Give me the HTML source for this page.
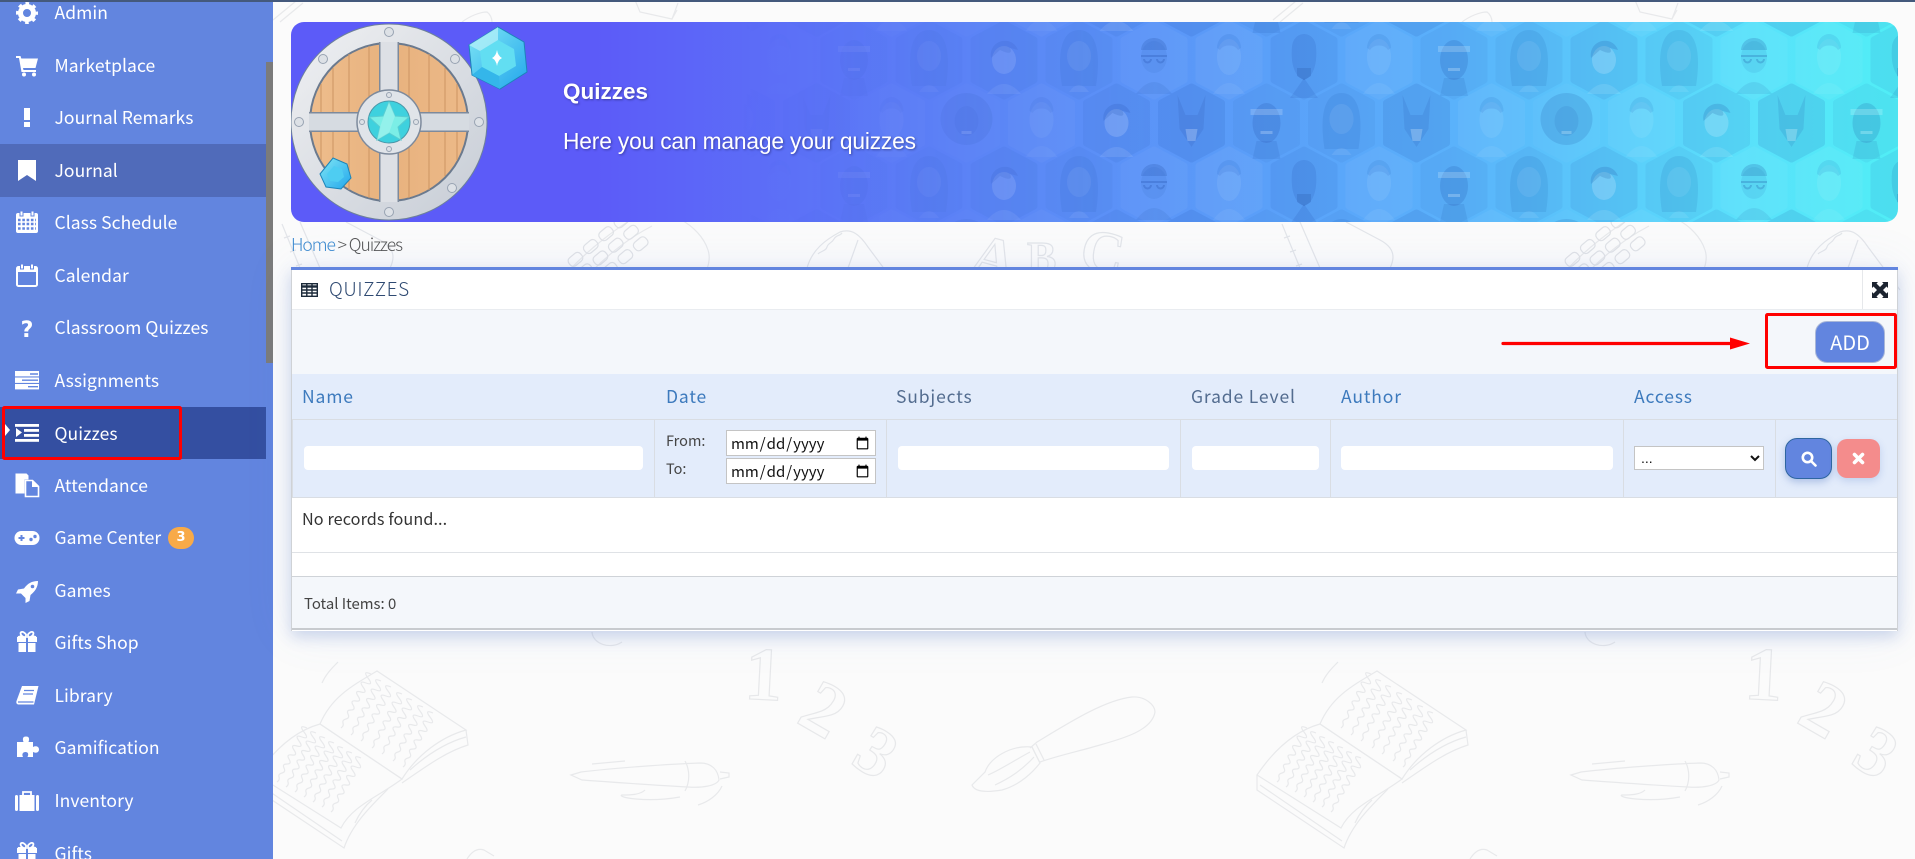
<!DOCTYPE html>
<html lang="en"><head><meta charset="utf-8"><title>Quizzes</title>
<style>
html,body{margin:0;padding:0;width:1915px;height:859px;overflow:hidden;background:#fbfbfb}
body{position:relative;font-family:"Noto Sans CJK JP","Liberation Sans",sans-serif;color:#333}
.a{position:absolute;box-sizing:border-box}
.t{position:absolute;white-space:nowrap;height:30px;line-height:30px}
.nav{left:54.500px;color:#fff;font-size:17.5px;letter-spacing:.06px;margin-top:1px}
.h{font-size:17.5px;letter-spacing:.85px;color:#3d7abd;margin-top:1px}
.h2{color:#536c8f}
.inp{position:absolute;top:446px;height:24px;background:#fff;border-radius:4px}
.vl{position:absolute;top:419px;width:1px;height:78px;background:#d9dde3}
input[type=date]{position:absolute;left:726px;width:150px;height:26px;box-sizing:border-box;border:1px solid #c4c4c4;background:#fff;padding:0 3px;margin:0;font:15px "Noto Sans CJK JP","Liberation Sans",sans-serif;color:#111;border-radius:0}
select{position:absolute;left:1634px;top:446px;width:130px;height:24px;box-sizing:border-box;border:1px solid #c4c4c4;background:#fff;font:14px "Liberation Sans",sans-serif;color:#111;padding:0 0 0 2px;border-radius:0}
svg{display:block}
</style></head><body>

<svg class="a" style="left:0;top:0" width="1915" height="859" viewBox="0 0 1915 859" fill="none" stroke="#e8e9eb" stroke-width="1.2">
<defs>
<path id="sq" d="M0 0q3-2 2-5t3-4 2-5 3-4 2-5 3-4 2-5 3-4 2-5 3-4 2-5 3-4"/>
<g id="bk">
<path d="M320 724C331 698 350 687 377 671L466 730C441 737 417 755 402 779Z"/>
<path d="M320 724C295 731 274 750 257 775L341 828C352 806 378 797 402 779Z"/>
<path d="M257 775V790L344 848C352 824 372 805 388 789M466 730L468 745C445 752 424 768 402 783M260 785L342 841M410 770C430 752 448 742 466 737"/>
<path d="M322 683C326 674 332 668 338 662M355 823C360 812 366 805 372 800"/>
<use href="#sq" x="341" y="728"/><use href="#sq" x="351" y="735"/><use href="#sq" x="361" y="741"/><use href="#sq" x="372" y="748"/><use href="#sq" x="382" y="754"/><use href="#sq" x="393" y="761"/><use href="#sq" x="403" y="767"/>
<use href="#sq" x="277" y="782"/><use href="#sq" x="286" y="787"/><use href="#sq" x="295" y="792"/><use href="#sq" x="304" y="797"/><use href="#sq" x="313" y="802"/><use href="#sq" x="322" y="807"/><use href="#sq" x="331" y="812"/>
</g>
<g id="pen">
<path d="M571 775L581 772C615 768 670 764 700 763C712 763 718 770 719 780C716 786 702 788 688 787C650 785 610 782 582 780Z"/>
<path d="M685 761C690 770 690 782 685 791M720 772L729 773 729 777 720 779M592 764L625 761M645 790C640 795 630 795 622 795 C616 797 646 803 680 797M698 805C708 802 718 795 722 786"/>
</g>
<g id="brush">
<path d="M1032 747C1010 745 990 758 985 772 L972 785C975 793 990 792 1002 790C1020 785 1033 772 1040 763Z"/>
<path d="M1032 747L1040 763M1036 744L1044 760M1030 748L1037 742C1070 722 1105 700 1132 697C1145 696 1155 705 1155 712C1152 730 1125 738 1100 745C1080 751 1060 755 1040 762"/>
<path d="M988 775C1000 770 1015 760 1030 752M995 785C1010 778 1022 770 1034 757"/>
</g>
<g id="calc">
<path d="M561 280C585 250 625 222 640 215C665 205 700 225 708 250C712 262 705 275 700 282"/>
<path d="M575 290C600 260 625 240 652 226"/>
<g transform="rotate(-40 610 250)" stroke="#e0e2e6"><rect x="570" y="230" width="15" height="10" rx="4"/><rect x="590" y="230" width="15" height="10" rx="4"/><rect x="610" y="230" width="15" height="10" rx="4"/><rect x="630" y="230" width="15" height="10" rx="4"/><rect x="570" y="245" width="15" height="10" rx="4"/><rect x="590" y="245" width="15" height="10" rx="4"/><rect x="610" y="245" width="15" height="10" rx="4"/><rect x="630" y="245" width="15" height="10" rx="4"/><rect x="570" y="260" width="15" height="10" rx="4"/><rect x="590" y="260" width="15" height="10" rx="4"/><rect x="610" y="260" width="15" height="10" rx="4"/><rect x="630" y="260" width="15" height="10" rx="4"/></g>
</g>
<g id="mid" stroke="#e3e5e9">
<path d="M807 268C812 250 825 240 840 232C852 228 860 235 868 247L900 290M848 268L858 240"/>
<path d="M818 254c3-3 8-3 9-7s5-4 7-8 6-3 8-6"/>
<path d="M282 224L300 268M300 222L320 268M284 238l6-2M290 252l6-2M296 266l6-2"/>
<path d="M346 222L380 240C395 248 395 258 390 268"/>
<g font-family="Liberation Serif,serif" font-size="60" font-weight="700"><text x="968" y="272" transform="rotate(15 968 272)">A</text><text x="1027" y="272" font-size="44">B</text><text x="1078" y="268" transform="rotate(10 1078 268)">C</text></g>
</g>
<g id="top">
<path d="M635 0L640 12 672 19 678 3M672 19L677 10"/>
<path d="M462 22C470 16 480 12 487 12 490 14 492 18 492 22"/>
<path d="M273 20L296 1M280 22L303 3"/>
</g>
<g id="nums" font-family="Liberation Serif,serif" font-weight="700" stroke="#e7e8ea">
<text x="745" y="700" font-size="76" transform="rotate(3 770 670)">1</text>
<text x="806" y="740" font-size="76" transform="rotate(30 835 710)">2</text>
<text x="858" y="778" font-size="70" transform="rotate(32 880 755)">3</text>
</g>
</defs>
<use href="#bk"/><use href="#bk" x="1000"/>
<use href="#pen"/><use href="#pen" x="1000"/>
<use href="#nums"/><use href="#nums" x="1000"/>
<use href="#brush"/><use href="#brush" x="-1000"/>
<use href="#calc"/><use href="#calc" x="997"/>
<use href="#mid"/><use href="#mid" x="1000"/>
<use href="#top"/><use href="#top" x="1000"/>
<path d="M467 859C472 851 478 848 484 850L494 856M1470 859C1475 851 1481 848 1487 850L1497 856"/>
<path d="M592 632a18 14 0 0 0 30 10M1585 632a18 14 0 0 0 30 10" />
</svg>

<!-- top strip -->
<div class="a" style="left:0;top:0;width:1915px;height:2px;background:#44597c;z-index:5"></div>

<!-- sidebar -->
<div class="a" style="left:0;top:0;width:273px;height:859px;background:#6285df"></div>
<div class="a" style="left:266px;top:62px;width:7px;height:301px;background:#7b7b7b"></div>
<div class="a" style="left:0;top:144px;width:266px;height:53px;background:#506bba"></div>
<div class="a" style="left:0;top:407px;width:266px;height:52px;background:#344fa1"></div>

<div class="t nav" style="top:-3px">Admin</div>
<div class="t nav" style="top:50px">Marketplace</div>
<div class="t nav" style="top:102px">Journal Remarks</div>
<div class="t nav" style="top:155px">Journal</div>
<div class="t nav" style="top:207px">Class Schedule</div>
<div class="t nav" style="top:260px">Calendar</div>
<div class="t nav" style="top:312px">Classroom Quizzes</div>
<div class="t nav" style="top:365px">Assignments</div>
<div class="t nav" style="top:418px">Quizzes</div>
<div class="t nav" style="top:470px">Attendance</div>
<div class="t nav" style="top:522px">Game Center</div>
<div class="t nav" style="top:575px">Games</div>
<div class="t nav" style="top:627px">Gifts Shop</div>
<div class="t nav" style="top:680px">Library</div>
<div class="t nav" style="top:732px">Gamification</div>
<div class="t nav" style="top:785px">Inventory</div>
<div class="t nav" style="top:838px">Gifts</div>
<div class="a" style="left:168px;top:527px;width:26px;height:22px;border-radius:11px;background:#f8aa48;color:#fff;font:700 13px/22px 'DejaVu Sans',sans-serif;text-align:center">3</div>

<svg class="a" style="left:0;top:0" width="273" height="859" viewBox="0 0 273 859" fill="#fff">
<defs><g id="gift"><path d="M4 8h8V5.500C11 4 9 2.500 7.500 3 6 3.500 6.500 6 8 7zM22 8h-8V5.500C15 4 17 2.500 18.500 3 20 3.500 19.500 6 18 7z" fill="none" stroke="#fff" stroke-width="1.800"/><rect x="3" y="8" width="9" height="5"/><rect x="14" y="8" width="9" height="5"/><rect x="4.500" y="14" width="7.500" height="9"/><rect x="14" y="14" width="7.500" height="9"/></g></defs>
<g transform="translate(14,0)"><circle cx="13" cy="13" r="6.500" fill="none" stroke="#fff" stroke-width="5"/><circle cx="13" cy="13" r="9.500" fill="none" stroke="#fff" stroke-width="3" stroke-dasharray="3.600 3.860" stroke-dashoffset="1.800"/></g>
<g transform="translate(14,52)"><path d="M2 4h4.500l.8 2.500H24l-2.500 9.500H9l.5 2H22v2H7.500L5 6H2z"/><circle cx="10" cy="22.500" r="2"/><circle cx="20" cy="22.500" r="2"/></g>
<g transform="translate(14,104)"><rect x="10" y="4" width="6" height="12"/><rect x="10" y="18" width="6" height="5"/></g>
<g transform="translate(14,157)"><path d="M4 3h18v21l-9-6-9 6z"/></g>
<g transform="translate(14,209)"><rect x="2" y="4" width="22" height="20" rx="2"/><rect x="6" y="2" width="3" height="5" stroke="#6285df"/><rect x="17" y="2" width="3" height="5" stroke="#6285df"/><path d="M4 11h18M4 15h18M4 19.500h18" stroke="#6285df" stroke-width="2.400" stroke-dasharray="2.600 1.700"/></g>
<g transform="translate(14,262)"><rect x="3" y="5" width="20" height="19" rx="1.500" fill="none" stroke="#fff" stroke-width="2"/><rect x="3" y="5" width="20" height="5"/><rect x="6.500" y="2" width="3" height="5" stroke="#6285df"/><rect x="16.500" y="2" width="3" height="5" stroke="#6285df"/></g>
<text x="27" y="337" font-family="DejaVu Sans,sans-serif" font-weight="700" font-size="22" text-anchor="middle">?</text>
<g transform="translate(14,367)"><rect x="1" y="4" width="24" height="5.400"/><rect x="1" y="10.500" width="24" height="5.400"/><rect x="1" y="17" width="24" height="5.400"/><path d="M16 7h8M8 13.200h16M14 19.700h10" stroke="#6285df" stroke-width="1.400"/></g>
<g transform="translate(14,419)"><rect x="1" y="5" width="24" height="2.800"/><rect x="10" y="10" width="15" height="2.800"/><rect x="10" y="15" width="15" height="2.800"/><rect x="1" y="20" width="24" height="2.800"/><path d="M2 9l6 4.500-6 4.500z"/></g>
<g transform="translate(14,472)"><path d="M1.500 1.500h11l2 2v4h-4v14h-9z"/><path d="M11.500 8.500h7l6 6v10h-13z" fill="#6285df" stroke="#fff" stroke-width="1.600"/><path d="M18 8.500v6.500h6.500z"/></g>
<g transform="translate(14,524)"><rect x="0.500" y="7" width="25" height="14" rx="7"/><path d="M4.500 14h6M7.500 11v6" stroke="#6285df" stroke-width="2"/><circle cx="17" cy="15.500" r="1.700" fill="#6285df"/><circle cx="21" cy="12.500" r="1.700" fill="#6285df"/></g>
<g transform="translate(14,578)"><path d="M24 3C18 3 13.500 5.500 10 10.500L4 11.500 2 15.500 7 15.500 11.500 20 11.500 25 15.500 23 16.500 17C21 13.500 24 9 24 3Z"/><circle cx="18.500" cy="8.500" r="1.800" fill="#6285df"/></g>
<use href="#gift" transform="translate(14,629)"/>
<g transform="translate(14,682)"><path d="M8 4H24.500L20 22.500H4.500C2.500 22.500 2 20.500 2.500 19Z"/><path d="M10 8.500h10M9 12h10M4 20h15.500" stroke="#6285df" stroke-width="1.300"/></g>
<g transform="translate(14,734)"><path d="M3 8h6.500C8 4 9.500 2.500 12 2.500S16 4 14.500 8H19v5c3-1.500 6-.5 6 2.500s-3 4-6 2.500v5h-5.500c1.500-3 .5-5-2-5s-4 2-2.500 5H3z"/></g>
<g transform="translate(14,787)"><rect x="1" y="8" width="3" height="16" rx="1.500"/><rect x="5.500" y="8" width="15" height="16"/><rect x="22" y="8" width="3" height="16" rx="1.500"/><path d="M9 8V5h8v3" fill="none" stroke="#fff" stroke-width="1.800"/></g>
<use href="#gift" transform="translate(14,840)"/>
<path d="M5 424l5 6-5 6z"/>
</svg>

<!-- banner -->
<div class="a" style="left:291px;top:22px;width:1607px;height:200px;border-radius:13px;overflow:hidden;background:linear-gradient(90deg,#5c5bf8 0,#5c5bf8 19%,#5b86f6 44%,#5ab1fb 72%,#5ae0fb 90%,#50eef6 100%)">
<svg width="1607" height="200" viewBox="0 0 1607 200" style="position:absolute;left:0;top:0">
<defs>
<linearGradient id="fade" x1="0" x2="1" y1="0" y2="0"><stop offset=".28" stop-color="#000"/><stop offset=".55" stop-color="#bbb"/></linearGradient>
<mask id="m"><rect width="1607" height="200" fill="url(#fade)"/></mask>
<path id="hx" d="M0-36L30-20V20L0 36-30 20V-20Z" stroke-width="7" stroke-linejoin="round"/>
<g id="f1"><use href="#hx" fill="#1e4fb0" stroke="#1e4fb0" opacity=".1"/><path d="M-17 26C-22-6-18-30 0-30S22-6 17 26Z" fill="#1a48a5" opacity=".16"/><ellipse cy="-4" rx="12" ry="15" fill="#fff" opacity=".1"/><path d="M-10 32Q0 18 10 32Z" fill="#fff" opacity=".1"/></g>
<g id="f2"><use href="#hx" fill="#fff" stroke="#fff" opacity=".05"/><ellipse cy="-3" rx="13" ry="16" fill="#1a48a5" opacity=".12"/><path d="M-13-10C-12-26 12-26 13-10Z" fill="#123a90" opacity=".25"/><path d="M-13-4h26M-10-1a3 3 0 1 0 7 0M3-1a3 3 0 1 0 7 0" stroke="#123a90" opacity=".3" stroke-width="2" fill="none"/><path d="M-18 34Q0 10 18 34Z" fill="#123a90" opacity=".12"/></g>
<g id="f3"><use href="#hx" fill="#1e4fb0" stroke="#1e4fb0" opacity=".12"/><path d="M-12-14C-10-30 10-30 12-14 14 6 8 18 0 20-8 18-14 6-12-14Z" fill="#123a90" opacity=".16"/><path d="M-7 8h14v8l-7 4-7-4z" fill="#123a90" opacity=".26"/><path d="M-14 38L0 18 14 38Z" fill="#123a90" opacity=".16"/></g>
<g id="f4"><use href="#hx" fill="#1e4fb0" stroke="#1e4fb0" opacity=".18"/><path d="M-14-28L-6-8H6L14-28 12 6 0 24-12 6Z" fill="#123a90" opacity=".16"/><path d="M-6 6H6L4 18H-4Z" fill="#fff" opacity=".3"/></g>
<g id="f5"><use href="#hx" fill="#fff" stroke="#fff" opacity=".04"/><circle cy="-4" r="26" fill="#123a90" opacity=".18"/><ellipse cy="-2" rx="12" ry="15" fill="#123a90" opacity=".14"/><path d="M-5 8h10v3h-10z" fill="#fff" opacity=".3"/></g>
<g id="f6"><use href="#hx" fill="#1e4fb0" stroke="#1e4fb0" opacity=".1"/><ellipse cy="0" rx="14" ry="20" fill="#123a90" opacity=".22"/><rect x="-16" y="-14" width="32" height="6" fill="#fff" opacity=".25"/><path d="M-6 8h12v3H-6z" fill="#fff" opacity=".3"/><path d="M-14 36L-10 18H10L14 36Z" fill="#123a90" opacity=".14"/></g>
<g id="f7"><use href="#hx" fill="#fff" stroke="#fff" opacity=".06"/><ellipse cy="-3" rx="12" ry="18" fill="#fff" opacity=".1"/><path d="M-12-12a12 14 0 0 1 24 0l-3 2a10 8 0 0 0-18 0z" fill="#1a48a5" opacity=".15"/><path d="M-16 34Q0 12 16 34Z" fill="#fff" opacity=".08"/></g>
<g id="f8"><use href="#hx" fill="#1e4fb0" stroke="#1e4fb0" opacity=".14"/><ellipse cy="0" rx="12" ry="14" fill="#fff" opacity=".24"/><path d="M-13-2C-16-20 8-26 14-10L6-12C10-4 0-8-4-10Z" fill="#123a90" opacity=".22"/><path d="M-17 34Q0 14 17 34Z" fill="#fff" opacity=".14"/></g>
<g id="ra"><use href="#f1" x="37.500"/><use href="#f2" x="112.500"/><use href="#f7" x="187.500"/><use href="#f3" x="262.500"/><use href="#f7" x="337.500"/><use href="#f6" x="412.500"/><use href="#f1" x="487.500"/><use href="#f8" x="562.500"/></g>
<g id="rb"><use href="#f7" x="0"/><use href="#f8" x="75"/><use href="#f4" x="150"/><use href="#f6" x="225"/><use href="#f1" x="300"/><use href="#f4" x="375"/><use href="#f7" x="450"/><use href="#f5" x="525"/><use href="#f7" x="600"/></g>
<pattern id="p" patternUnits="userSpaceOnUse" width="600" height="126" x="750.500" y="-2"><use href="#ra" y="40"/><use href="#rb" y="103"/><use href="#rb" y="-23"/></pattern>
<linearGradient id="wood" x1="0" x2="1" y1="0" y2="0"><stop offset="0" stop-color="#eebd8c"/><stop offset=".5" stop-color="#e8b27e"/><stop offset="1" stop-color="#ecb988"/></linearGradient>
<linearGradient id="ring" x1="0" y1="0" x2="1" y2="1"><stop offset="0" stop-color="#f0f1f3"/><stop offset="1" stop-color="#c6ccd5"/></linearGradient>
<linearGradient id="gem" x1="0" y1="0" x2="1" y2="1"><stop offset="0" stop-color="#7fe6f5"/><stop offset="1" stop-color="#22a6ec"/></linearGradient>
</defs>
<rect width="1607" height="200" fill="url(#p)" mask="url(#m)"/>
<!-- shield -->
<g transform="translate(98,100)">
<circle r="98" fill="url(#ring)" stroke="#6d8199" stroke-width="1"/>
<circle r="80" fill="#6b7a8e"/>
<circle r="78" fill="url(#wood)"/>
<path d="M-56-54V54M-40-68V68M-20-76V76M20-76V76M40-68V68M56-54V54M-68-38V38M68-38V38" stroke="#cf9866" stroke-width="1.100"/>
<rect x="-80" y="-10" width="160" height="20" fill="#7d8a9c"/><rect x="-10" y="-80" width="20" height="160" fill="#7d8a9c"/>
<rect x="-80" y="-8.500" width="160" height="17" fill="#d6dbe1"/><rect x="-8.500" y="-80" width="17" height="160" fill="#dde0e5"/>
<circle r="32" fill="#e0e4e9" stroke="#7d8a9c" stroke-width="1.500"/>
<circle r="21" fill="#3ed1de" stroke="#4a96a8" stroke-width="1"/>
<path d="M0-20L6-6 20-5 9 5 12 18 0 11-12 18-9 5-20-5-6-6Z" fill="#7beee6" stroke="#58cdd2"/>
<path d="M0-20L6-6 0 11-12 18-9 5Z" fill="#a4f3ee" opacity=".6"/>
<g fill="#dde1e6" stroke="#98a3b2"><circle cy="-90" r="4.500"/><circle cy="90" r="4.500"/><circle cx="-90" r="4.500"/><circle cx="90" r="4.500"/><circle cx="-66" cy="-63" r="4.500"/><circle cx="66" cy="-63" r="4.500"/><circle cx="63" cy="66" r="4.500"/><circle cy="-27" r="2.500"/><circle cy="27" r="2.500"/><circle cx="-27" r="2.500"/><circle cx="27" r="2.500"/></g>
</g>
<!-- gems -->
<g transform="translate(207,36)"><path d="M0-31L26-16 29 14 2 31-26 17-29-13Z" fill="url(#gem)" stroke="#1c84b8"/><path d="M0-18L16-9 18 8 1 18-16 9-18-7Z" fill="#62def2"/><path d="M0-31L-29-13-18-7 0-18Z" fill="#b4f0f8" opacity=".75"/><path d="M-26 17L2 31 1 18-16 9Z" fill="#34b6ea"/><path d="M-1-8Q0-2 4 0 0 2-1 8-2 2-6 0-2-2-1-8Z" fill="#fff"/></g>
<g transform="translate(44,152)"><path d="M-2-16L12-10 16 4 6 15-9 13-15 0Z" fill="url(#gem)" stroke="#1c84b8"/><path d="M-1-8L7-5 9 3 3 8-5 7-8 0Z" fill="#4ecdf2"/></g>
</svg>
<div class="t" style="left:272px;top:55px;color:#fff;font:700 22.500px/30px 'Liberation Sans',sans-serif;text-shadow:1px 1px 2px rgba(30,30,90,.5)">Quizzes</div>
<div class="t" style="left:272px;top:104px;color:#fff;font:22.800px/30px 'Liberation Sans',sans-serif;letter-spacing:-.18px;text-shadow:1px 1px 2px rgba(30,30,90,.5)">Here you can manage your quizzes</div>
</div>

<!-- breadcrumb -->
<div class="t" style="left:291px;top:230px;font-size:17.5px;font-weight:300;letter-spacing:-1.05px;color:#555"><span style="color:#3d8bd0">Home</span> &gt; Quizzes</div>

<!-- card -->
<div class="a" style="left:291px;top:267px;width:1607px;height:364px;background:#fff;border-left:1px solid #cfd2d6;border-right:1px solid #cfd2d6;box-shadow:0 6px 14px rgba(70,110,190,.24),0 0 45px rgba(98,133,224,.10)"></div>
<div class="a" style="left:291px;top:267px;width:1607px;height:3px;background:#6285df"></div>
<div class="a" style="left:292px;top:309px;width:1605px;height:65px;background:#f4f7fb;border-top:1px solid #e9ecf0"></div>
<div class="a" style="left:292px;top:374px;width:1605px;height:123px;background:#e3ecfb"></div>
<div class="a" style="left:292px;top:419px;width:1605px;height:1px;background:#d9dde3"></div>
<div class="a" style="left:292px;top:497px;width:1605px;height:1px;background:#d9dde3"></div>
<div class="a" style="left:292px;top:552px;width:1605px;height:1px;background:#dfe2e6"></div>
<div class="a" style="left:292px;top:576px;width:1605px;height:54px;background:#f4f7fb;border-top:1px solid #cfd3d8;border-bottom:2px solid #c8cbcf"></div>
<div class="a" style="left:1862px;top:270px;width:1px;height:39px;background:#e6e8eb"></div>
<div class="vl" style="left:292px"></div><div class="vl" style="left:654px"></div><div class="vl" style="left:886px"></div><div class="vl" style="left:1180px"></div><div class="vl" style="left:1330px"></div><div class="vl" style="left:1623px"></div><div class="vl" style="left:1775px"></div>

<svg class="a" style="left:301px;top:283px" width="17" height="14" viewBox="0 0 17 14" fill="none" stroke="#1c2a3a" stroke-width="1.400"><rect x=".7" y=".7" width="15.600" height="12.600"/><path d="M.7 3.500h15.600" stroke-width="2.400"/><path d="M.7 7h15.600M.7 10h15.600M5.800 1v12M11 1v12"/></svg>
<div class="t" style="left:329px;top:274px;font-size:19px;letter-spacing:.6px;font-weight:300;color:#2f4a72">QUIZZES</div>
<svg class="a" style="left:1872px;top:282px" width="16" height="16" viewBox="0 0 16 16" fill="#1c2430"><path d="M0 0h6L4.500 1.500 8 5 11.500 1.500 10 0h6v6L14.500 4.500 11 8l3.500 3.500L16 10v6h-6l1.500-1.500L8 11 4.500 14.500 6 16H0v-6l1.500 1.500L5 8 1.500 4.500 0 6z"/></svg>

<div class="a" style="left:1815px;top:321px;width:70px;height:42px;border-radius:12px;background:#6285df;border:1px solid #a9b7d8;color:#fff;font:20px/39px 'Noto Sans CJK JP','Liberation Sans',sans-serif;text-align:center">ADD</div>

<div class="t h" style="left:302px;top:381px">Name</div>
<div class="t h" style="left:666px;top:381px">Date</div>
<div class="t h h2" style="left:896px;top:381px">Subjects</div>
<div class="t h h2" style="left:1191px;top:381px">Grade Level</div>
<div class="t h" style="left:1341px;top:381px">Author</div>
<div class="t h" style="left:1634px;top:381px">Access</div>

<div class="inp" style="left:304px;width:339px"></div>
<div class="inp" style="left:898px;width:271px"></div>
<div class="inp" style="left:1192px;width:127px"></div>
<div class="inp" style="left:1341px;width:272px"></div>
<div class="t" style="left:666px;top:426px;font-size:14.500px;color:#444">From:</div>
<div class="t" style="left:666px;top:454px;font-size:14.500px;color:#444">To:</div>
<input type="date" style="top:430px"><input type="date" style="top:458px">
<select><option>...</option></select>

<div class="a" style="left:1785px;top:438px;width:47px;height:41px;border-radius:12px;background:#6285df;border:1px solid #2f66a0;box-shadow:0 3px 8px rgba(70,110,190,.35)"></div>
<svg class="a" style="left:1801px;top:451px" width="16" height="16" viewBox="0 0 16 16" fill="none" stroke="#fff" stroke-width="2.600"><circle cx="6.500" cy="6.500" r="4.700"/><path d="M10 10l4.500 4.500" stroke-linecap="round"/></svg>
<div class="a" style="left:1837px;top:439px;width:43px;height:39px;border-radius:10px;background:#f48c8c;box-shadow:0 3px 8px rgba(70,110,190,.22)"></div>
<svg class="a" style="left:1852px;top:452px" width="13" height="13" viewBox="0 0 13 13" stroke="#fff" stroke-width="3.600" stroke-linecap="round"><path d="M2.500 2.500l8 8M10.500 2.500l-8 8"/></svg>

<div class="t" style="left:302px;top:503px;font-size:16.200px;letter-spacing:.1px;color:#333">No records found...</div>
<div class="t" style="left:304px;top:589px;font-size:14.900px;color:#444">Total Items: 0</div>

<!-- annotations -->
<svg class="a" style="left:0;top:0;z-index:9" width="1915" height="859" viewBox="0 0 1915 859" fill="none">
<rect x="3.500" y="407.500" width="177" height="51" rx="1" stroke="#f00" stroke-width="3"/>
<rect x="1766.500" y="314.500" width="129" height="53" rx="1" stroke="#f00" stroke-width="3"/>
<path d="M1503 343.500H1732" stroke="#f00" stroke-width="3.200" stroke-linecap="round"/>
<path d="M1730 337.500L1750 343.500 1730 349.500Z" fill="#f00"/>
</svg>
</body></html>
